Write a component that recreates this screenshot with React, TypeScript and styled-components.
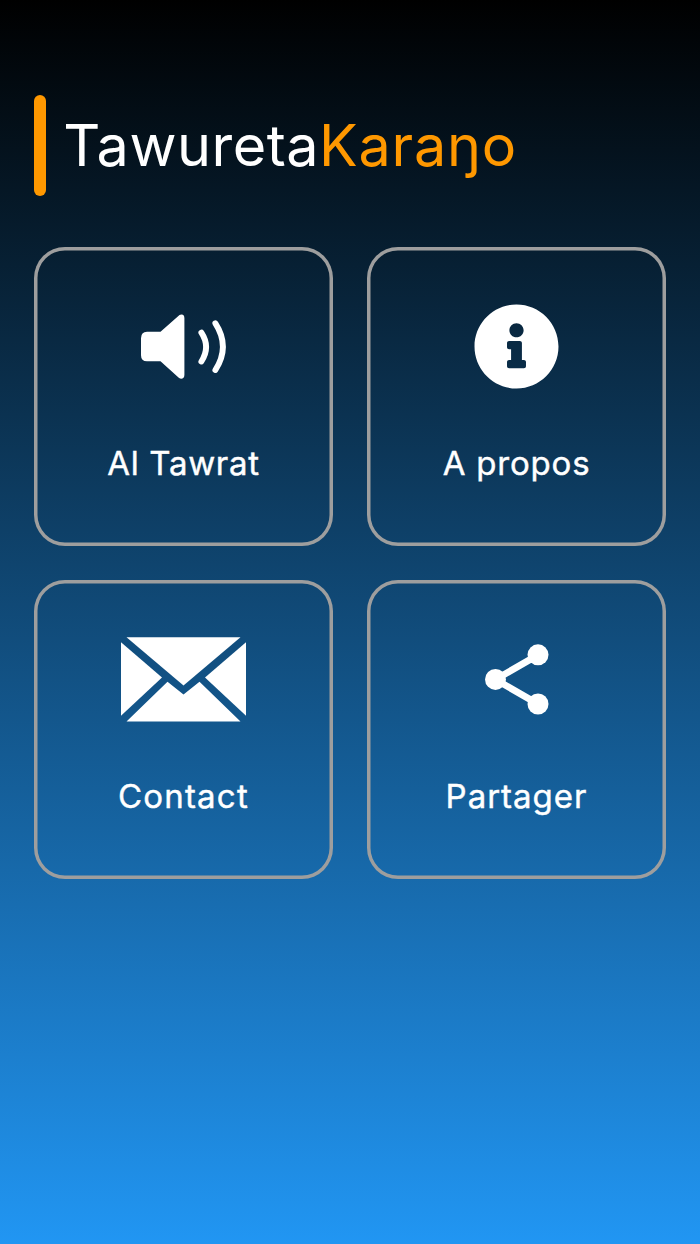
import React from "react";
import styled, { createGlobalStyle } from "styled-components";

const GlobalStyle = createGlobalStyle`
  * { box-sizing: border-box; }
  body { margin: 0; }
`;

const Screen = styled.main`
  min-height: 1244px;
  padding: 95px 33.8px 0;
  background: linear-gradient(180deg, #000 0%, #2196f3 100%);
  color: #fff;
  font-family: Inter, "Liberation Sans", sans-serif;
`;

const Header = styled.header`
  display: flex;
  align-items: center;
  height: 101.4px;
  gap: 17.4px;
`;

const AccentBar = styled.span`
  width: 12px;
  height: 100%;
  border-radius: 6px;
  background: #ff9800;
`;

const Title = styled.h1`
  margin: 0;
  padding-bottom: 2px;
  font-size: 57.5px;
  font-weight: 400;
  line-height: 70px;
  letter-spacing: 0.5px;
  white-space: nowrap;
`;

const TitleAccent = styled.span`
  color: #ff9800;
  letter-spacing: 0.8px;
`;

const Grid = styled.nav`
  display: grid;
  grid-template-columns: 1fr 1fr;
  grid-auto-rows: 299.3px;
  gap: 33.8px;
  margin-top: 50.4px;
`;

const Card = styled.button`
  display: flex;
  flex-direction: column;
  align-items: center;
  padding: 57px 0 0;
  border: 0;
  border-radius: 31px;
  box-shadow: inset 0 0 0 3.5px #9e9e9e;
  background: transparent;
  color: inherit;
  font-family: inherit;
`;

const Icon = styled.svg`
  display: block;
  height: 85px;
  fill: #fff;
  overflow: visible;
`;

const Label = styled.span<{ $spacing: number }>`
  margin-top: 54px;
  font-size: 33px;
  font-weight: 400;
  line-height: 41px;
  letter-spacing: ${(p) => p.$spacing}px;
  -webkit-text-stroke: 0.4px currentColor;
`;

const SpeakerIcon = () => (
  <Icon width="86" viewBox="0 0 86 85">
    <path d="M7 27.7H20.5L39.5 11Q41 10 43 10.8Q44.4 11.8 44.4 14V71Q44.4 73.5 43 74.3Q41 75.5 38.5 73.5L20.5 57.3H7Q1 57.3 1 51.3V34.2Q1 27.7 7 27.7Z" />
    <path d="M61.4 28.7Q70.8 43 61.4 57.5M75.4 19.3Q90.4 42.5 75.4 66" fill="none" stroke="#fff" strokeWidth="5.9" strokeLinecap="round" />
  </Icon>
);

const InfoIcon = () => (
  <Icon width="85" viewBox="5 5 502 502">
    <path d="M256 8C119.043 8 8 119.083 8 256c0 136.997 111.043 248 248 248s248-111.003 248-248C504 119.083 392.957 8 256 8zm0 110c23.196 0 42 18.804 42 42s-18.804 42-42 42-42-18.804-42-42 18.804-42 42-42zm56 254c0 6.627-5.373 12-12 12h-88c-6.627 0-12-5.373-12-12v-24c0-6.627 5.373-12 12-12h12v-64h-12c-6.627 0-12-5.373-12-12v-24c0-6.627 5.373-12 12-12h64c6.627 0 12 5.373 12 12v100h12c6.627 0 12 5.373 12 12v24z" />
  </Icon>
);

const MailIcon = () => (
  <Icon width="126" viewBox="0 0 126 85">
    <path d="M6.5 .3H120.5L63.5 48.5Z" />
    <path d="M1 5.3L42 40.5L1 78.8Z" />
    <path d="M126 5.3V78.8L85 40.5Z" />
    <path d="M6.5 84.6L47.5 44.7L63.5 57.5L79.5 44.7L120.5 84.6Z" />
  </Icon>
);

const ShareIcon = () => (
  <Icon width="85" viewBox="0 0 85 85">
    <path d="M64 18L21.5 42.5L64 67" fill="none" stroke="#fff" strokeWidth="6.8" />
    <circle cx="64" cy="17.8" r="10.5" />
    <circle cx="21.5" cy="42.4" r="10.5" />
    <circle cx="64" cy="67" r="10.5" />
  </Icon>
);

const items = [
  { label: "Al Tawrat", spacing: 0.7, Glyph: SpeakerIcon },
  { label: "A propos", spacing: 0.8, Glyph: InfoIcon },
  { label: "Contact", spacing: 1.2, Glyph: MailIcon },
  { label: "Partager", spacing: 1, Glyph: ShareIcon },
];

export default function App() {
  return (
    <>
      <GlobalStyle />
      <Screen>
        <Header>
          <AccentBar />
          <Title>
            Tawureta<TitleAccent>Karaŋo</TitleAccent>
          </Title>
        </Header>
        <Grid>
          {items.map(({ label, spacing, Glyph }) => (
            <Card key={label} type="button">
              <Glyph />
              <Label $spacing={spacing}>{label}</Label>
            </Card>
          ))}
        </Grid>
      </Screen>
    </>
  );
}
